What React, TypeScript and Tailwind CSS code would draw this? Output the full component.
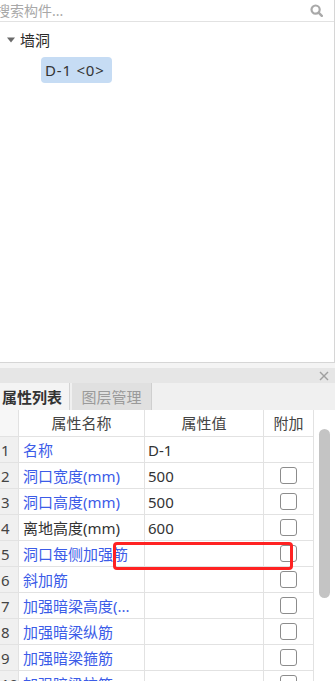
export default function App() {
  const rows: { n: number; name: string; val: string; cb: boolean; blue: boolean }[] = [
    { n: 1, name: "名称", val: "D-1", cb: false, blue: true },
    { n: 2, name: "洞口宽度(mm)", val: "500", cb: true, blue: true },
    { n: 3, name: "洞口高度(mm)", val: "500", cb: true, blue: true },
    { n: 4, name: "离地高度(mm)", val: "600", cb: true, blue: false },
    { n: 5, name: "洞口每侧加强筋", val: "", cb: true, blue: true },
    { n: 6, name: "斜加筋", val: "", cb: true, blue: true },
    { n: 7, name: "加强暗梁高度(...", val: "", cb: true, blue: true },
    { n: 8, name: "加强暗梁纵筋", val: "", cb: true, blue: true },
    { n: 9, name: "加强暗梁箍筋", val: "", cb: true, blue: true },
    { n: 10, name: "加强暗梁拉筋", val: "", cb: true, blue: true },
  ];
  return (
    <div className="relative w-[335px] h-[681px] overflow-hidden bg-white font-['Noto_Sans','Noto_Sans_CJK_SC',sans-serif] text-[#333]">
      {/* top panel */}
      <div className="h-[363px] border-r border-b border-[#d6d6d6] flex flex-col">
        <div className="h-[22px] border-b border-[#e2e2e2] flex items-center justify-between pr-[11px]">
          <span className="-ml-[4px] text-[14px] leading-[20px] text-[#a8a8a8] whitespace-nowrap">搜索构件...</span>
          <svg width="13" height="13" viewBox="0 0 13 13">
            <circle cx="5.6" cy="5.6" r="4.1" fill="none" stroke="#a9a9a9" strokeWidth="2.2" />
            <line x1="8.6" y1="8.6" x2="11.8" y2="11.8" stroke="#a9a9a9" strokeWidth="2.4" strokeLinecap="round" />
          </svg>
        </div>
        <div className="mt-[6px] h-[24px] flex items-center pl-[7px]">
          <svg width="8" height="6" viewBox="0 0 8 6" className="mr-[5px]">
            <polygon points="0,0.5 8,0.5 4,5.5" fill="#6a6a6a" />
          </svg>
          <span className="text-[15px] leading-[20px] text-[#2a2a2a]">墙洞</span>
        </div>
        <div className="mt-[5px] ml-[41px] w-[71px] h-[26px] rounded-[4px] bg-[#c6dcf4] flex items-center pl-[4px]">
          <span className="text-[15px] leading-[20px] tracking-[0.8px] text-[#333] whitespace-nowrap">D-1 &lt;0&gt;</span>
        </div>
      </div>
      {/* strip + title bar */}
      <div className="h-[5px] bg-[#f4f4f4]" />
      <div className="h-[15px] bg-[#e6e6e6] flex items-center justify-end pr-[6px]">
        <svg width="10" height="10" viewBox="0 0 10 10">
          <line x1="1" y1="1" x2="9" y2="9" stroke="#a0a0a0" strokeWidth="1.4" />
          <line x1="9" y1="1" x2="1" y2="9" stroke="#a0a0a0" strokeWidth="1.4" />
        </svg>
      </div>
      {/* tabs */}
      <div className="h-[27px] bg-[#f0f0f0] flex items-stretch">
        <div className="w-[70px] bg-[#f4f4f4] border-r border-[#d4d4d4] flex items-center pl-[2px]">
          <span className="text-[15px] leading-[20px] font-semibold text-[#333] whitespace-nowrap">属性列表</span>
        </div>
        <div className="ml-[2px] w-[80px] bg-[#e0e0e0] border-r border-[#cfcfcf] flex items-center justify-center">
          <span className="text-[15px] leading-[20px] text-[#9a9a9a] whitespace-nowrap">图层管理</span>
        </div>
      </div>
      {/* table */}
      <div className="flex">
        <div className="w-[314px] flex flex-col">
          <div className="h-[27px] flex border-b border-[#e2e2e2] text-[15px] leading-[20px] text-[#444]">
            <div className="w-[19px] border-r border-[#e2e2e2] bg-[#f7f7f7]" />
            <div className="w-[126px] border-r border-[#e2e2e2] flex items-center justify-center">属性名称</div>
            <div className="w-[119px] border-r border-[#e2e2e2] flex items-center justify-center">属性值</div>
            <div className="w-[50px] border-r border-[#e2e2e2] flex items-center justify-center">附加</div>
          </div>
          {rows.map((r) => (
            <div key={r.n} className="h-[26px] flex border-b border-[#e2e2e2] text-[15px] leading-[20px]">
              <div className="w-[19px] border-r border-[#e2e2e2] bg-[#f0f0f0] flex items-center pl-[1px] text-[#444]">{r.n}</div>
              <div
                className={
                  "w-[126px] border-r border-[#e2e2e2] flex items-center pl-[4px] whitespace-nowrap overflow-hidden " +
                  (r.blue ? "text-[#3c5ce8]" : "text-[#333]")
                }
              >
                {r.name}
              </div>
              <div className="w-[119px] border-r border-[#e2e2e2] flex items-center pl-[3px] text-[#333]">{r.val}</div>
              <div className="w-[50px] border-r border-[#e2e2e2] flex items-center justify-center">
                {r.cb && <div className="w-[17px] h-[17px] border-[1.5px] border-[#8c8c8c] rounded-[3px] bg-white" />}
              </div>
            </div>
          ))}
        </div>
        <div className="w-[21px] bg-white pl-[5px] pt-[19px]">
          <div className="w-[11px] h-[169px] rounded-full bg-[#c4c4c4]" />
        </div>
      </div>
      {/* red highlight */}
      <div className="absolute left-[113px] top-[542px] w-[180px] h-[28px] border-[3px] border-[#ff2222] rounded-[4px]" />
    </div>
  );
}
